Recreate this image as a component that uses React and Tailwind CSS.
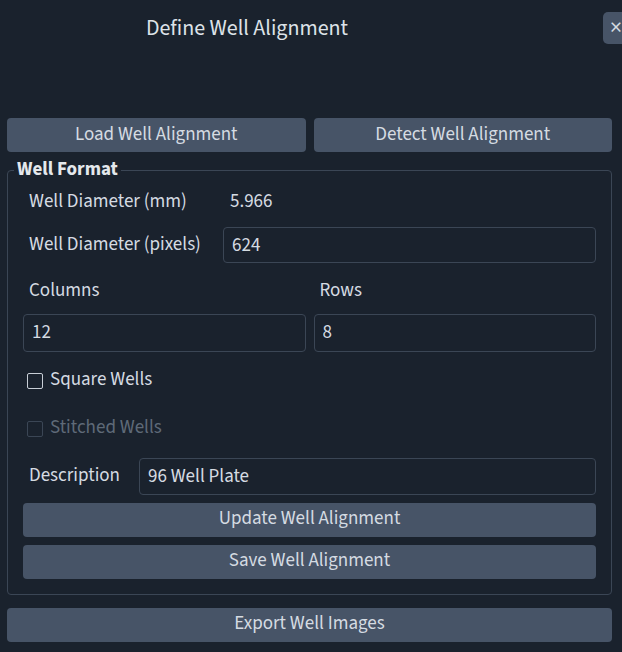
import React from "react";

const font = { fontFamily: '"Source Sans 3", "Source Sans Pro", Roboto, "Liberation Sans", sans-serif' };

function Btn({ children, className = "" }) {
  return (
    <button
      type="button"
      className={`flex items-center justify-center rounded-[4px] bg-[#475467] text-[19px] text-[#d5dbe2] ${className}`}
    >
      {children}
    </button>
  );
}

function Field({ value, className = "" }) {
  return (
    <input
      readOnly
      value={value}
      className={`rounded-[4px] border border-[#3b4655] bg-transparent px-[8px] text-[19px] text-[#d5dbe2] outline-none ${className}`}
    />
  );
}

function Check({ label, disabled }) {
  return (
    <label className={`flex items-center gap-[7px] text-[19px] ${disabled ? "text-[#5f6a78]" : "text-[#d5dbe2]"}`}>
      <span
        className={`block h-[16px] w-[16px] rounded-[2px] border ${disabled ? "border-[#3b4655]" : "border-[#c8ced6]"}`}
      />
      {label}
    </label>
  );
}

export default function App() {
  return (
    <div style={font} className="relative h-[652px] w-[622px] overflow-hidden bg-[#1a222d] text-[#d5dbe2]">
      {/* header */}
      <div className="flex h-[56px] items-center">
        <div className="w-[494px] text-center text-[22px] leading-none text-[#dde2e8]">Define Well Alignment</div>
      </div>
      <button
        type="button"
        className="absolute left-[603px] top-[12px] flex h-[32px] w-[34px] items-center rounded-[5px] bg-[#475467] pl-[7px] text-[24px] leading-none text-[#d5dbe2]"
      >
        ×
      </button>

      <div className="flex flex-col pl-[7px] pr-[10px] pt-[62px]">
        <div className="flex gap-[8px]">
          <Btn className="h-[34px] flex-1">Load Well Alignment</Btn>
          <Btn className="h-[34px] flex-1">Detect Well Alignment</Btn>
        </div>

        <fieldset className="mt-[7px] rounded-[4px] border border-[#3b4655] p-0">
          <legend className="ml-[6px] px-[3px] text-[19px] font-bold leading-[22px] text-[#e4e8ec]">Well Format</legend>
          <div className="px-[15px] pb-[15px]">
            <div className="mt-[4px] flex h-[34px] items-center pl-[6px] text-[19px]">
              <span className="w-[201px]">Well Diameter (mm)</span>
              <span>5.966</span>
            </div>
            <div className="mt-[8px] flex items-center">
              <span className="w-[200px] pl-[6px] text-[19px]">Well Diameter (pixels)</span>
              <Field value="624" className="h-[36px] flex-1" />
            </div>
            <div className="mt-[14px] grid grid-cols-2 gap-x-[8px]">
              <span className="pl-[6px] text-[19px]">Columns</span>
              <span className="pl-[6px] text-[19px]">Rows</span>
              <Field value="12" className="mt-[8px] h-[38px]" />
              <Field value="8" className="mt-[8px] h-[38px]" />
            </div>
            <div className="mt-[19px] flex h-[20px] items-center pl-[4px]">
              <Check label="Square Wells" />
            </div>
            <div className="mt-[28px] flex h-[20px] items-center pl-[4px]">
              <Check label="Stitched Wells" disabled />
            </div>
            <div className="mt-[19px] flex items-center">
              <span className="w-[116px] pl-[6px] text-[19px]">Description</span>
              <Field value="96 Well Plate" className="h-[37px] flex-1" />
            </div>
            <Btn className="mt-[8px] h-[34px] w-full">Update Well Alignment</Btn>
            <Btn className="mt-[8px] h-[34px] w-full">Save Well Alignment</Btn>
          </div>
        </fieldset>

        <Btn className="mt-[13px] h-[34px] w-full">Export Well Images</Btn>
      </div>
    </div>
  );
}
